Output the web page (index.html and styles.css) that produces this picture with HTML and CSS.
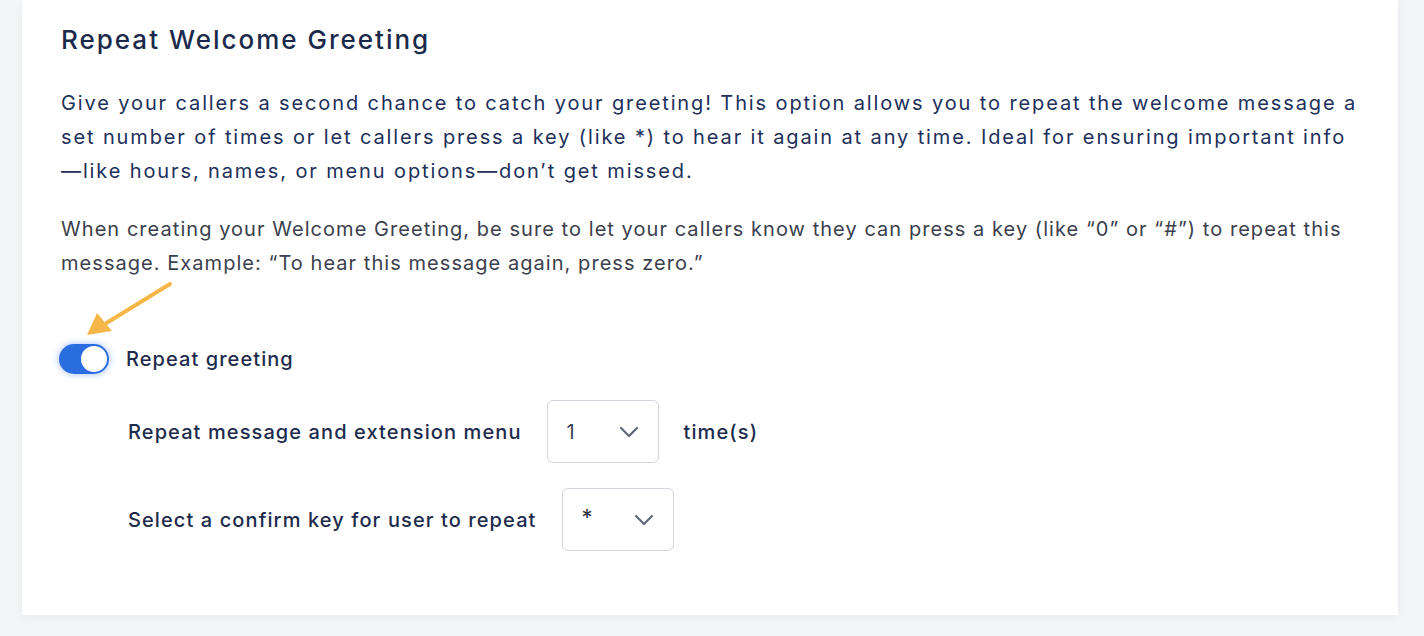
FILE: index.html
```html
<!DOCTYPE html>
<html>
<head>
<meta charset="utf-8">
<link rel="stylesheet" href="styles.css">
</head>
<body>
<div class="page">
  <section class="card">
    <h2 class="title">Repeat Welcome Greeting</h2>
    <p class="desc">Give your callers a second chance to catch your greeting! This option allows you to repeat the welcome message a set number of times or let callers press a key (like *) to hear it again at any time. Ideal for ensuring important info —like hours, names, or menu options—don’t get missed.</p>
    <p class="desc desc2">When creating your Welcome Greeting, be sure to let your callers know they can press a key (like “0” or “#”) to repeat this message. Example: “To hear this message again, press zero.”</p>
    <div class="toggle-row">
      <svg class="arrow" width="90" height="60" viewBox="0 0 90 60">
        <line x1="86" y1="3" x2="16" y2="46" stroke="#f5b748" stroke-width="4" stroke-linecap="round"/>
        <polygon points="3,54 13,32 28,50" fill="#f5b748"/>
      </svg>
      <span class="toggle"><span class="knob"></span></span>
      <span class="toggle-label">Repeat greeting</span>
    </div>
    <div class="opt-row">
      <span class="opt-label">Repeat message and extension menu</span>
      <span class="select"><span class="val">1</span><svg class="chev" width="20" height="12" viewBox="0 0 20 12"><path d="M2 2 L10 10 L18 2" fill="none" stroke="#5f6878" stroke-width="2.2" stroke-linecap="round" stroke-linejoin="round"/></svg></span>
      <span class="opt-label">time(s)</span>
    </div>
    <div class="opt-row">
      <span class="opt-label">Select a confirm key for user to repeat</span>
      <span class="select"><span class="val star">*</span><svg class="chev" width="20" height="12" viewBox="0 0 20 12"><path d="M2 2 L10 10 L18 2" fill="none" stroke="#5f6878" stroke-width="2.2" stroke-linecap="round" stroke-linejoin="round"/></svg></span>
    </div>
  </section>
</div>
</body>
</html>
```
FILE: styles.css
```css
html, body {
  margin: 0;
  padding: 0;
  background: #f4f5f7;
}
body {
  font-family: Inter, "Noto Sans", sans-serif;
  color: #1d2b4c;
}
.page {
  padding: 0 26px 20px 22px;
}
.card {
  background: #ffffff;
  padding: 23px 39px 64px 39px;
  box-shadow: 0 2px 10px rgba(30, 40, 60, 0.06);
}
.title {
  margin: 0;
  font-size: 26px;
  font-weight: 500;
  line-height: 34px;
  letter-spacing: 2px;
  color: #1b2a4b;
}
.desc {
  margin: 29px 0 0 0;
  font-size: 20px;
  line-height: 34px;
  letter-spacing: 1.88px;
  color: #21305a;
}
.desc2 {
  margin-top: 24px;
  letter-spacing: 1.05px;
  color: #3b3f4d;
}
.toggle-row {
  position: relative;
  display: flex;
  align-items: center;
  gap: 17px;
  margin-top: 64px;
  margin-left: -2px;
}
.arrow {
  position: absolute;
  left: 25px;
  top: -63px;
}
.toggle {
  width: 50px;
  height: 30px;
  border-radius: 15px;
  background: #2a6de1;
  box-shadow: 0 0 6px 1px rgba(42, 109, 225, 0.35);
  display: flex;
  align-items: center;
  justify-content: flex-end;
  padding: 0 2px;
  box-sizing: border-box;
}
.knob {
  width: 26px;
  height: 26px;
  border-radius: 50%;
  background: #fff;
}
.toggle-label {
  font-size: 20px;
  font-weight: 500;
  letter-spacing: 1.07px;
  color: #1d2b4c;
}
.opt-row {
  display: flex;
  align-items: center;
  gap: 25px;
  margin-left: 67px;
  margin-top: 26px;
}
.opt-row + .opt-row {
  margin-top: 25px;
}
.opt-label {
  font-size: 20px;
  font-weight: 500;
  letter-spacing: 1.1px;
  color: #1d2b4c;
}
.select {
  width: 112px;
  height: 63px;
  box-sizing: border-box;
  border: 1px solid #d3d6dc;
  border-radius: 6px;
  display: flex;
  align-items: center;
  justify-content: space-between;
  padding: 0 19px 0 19px;
}
.val {
  font-size: 20px;
  color: #3a4254;
}
.val.star {
  font-size: 22px;
  margin-top: -6px;
  color: #2b3242;
}
.chev {
  display: block;
}
```
